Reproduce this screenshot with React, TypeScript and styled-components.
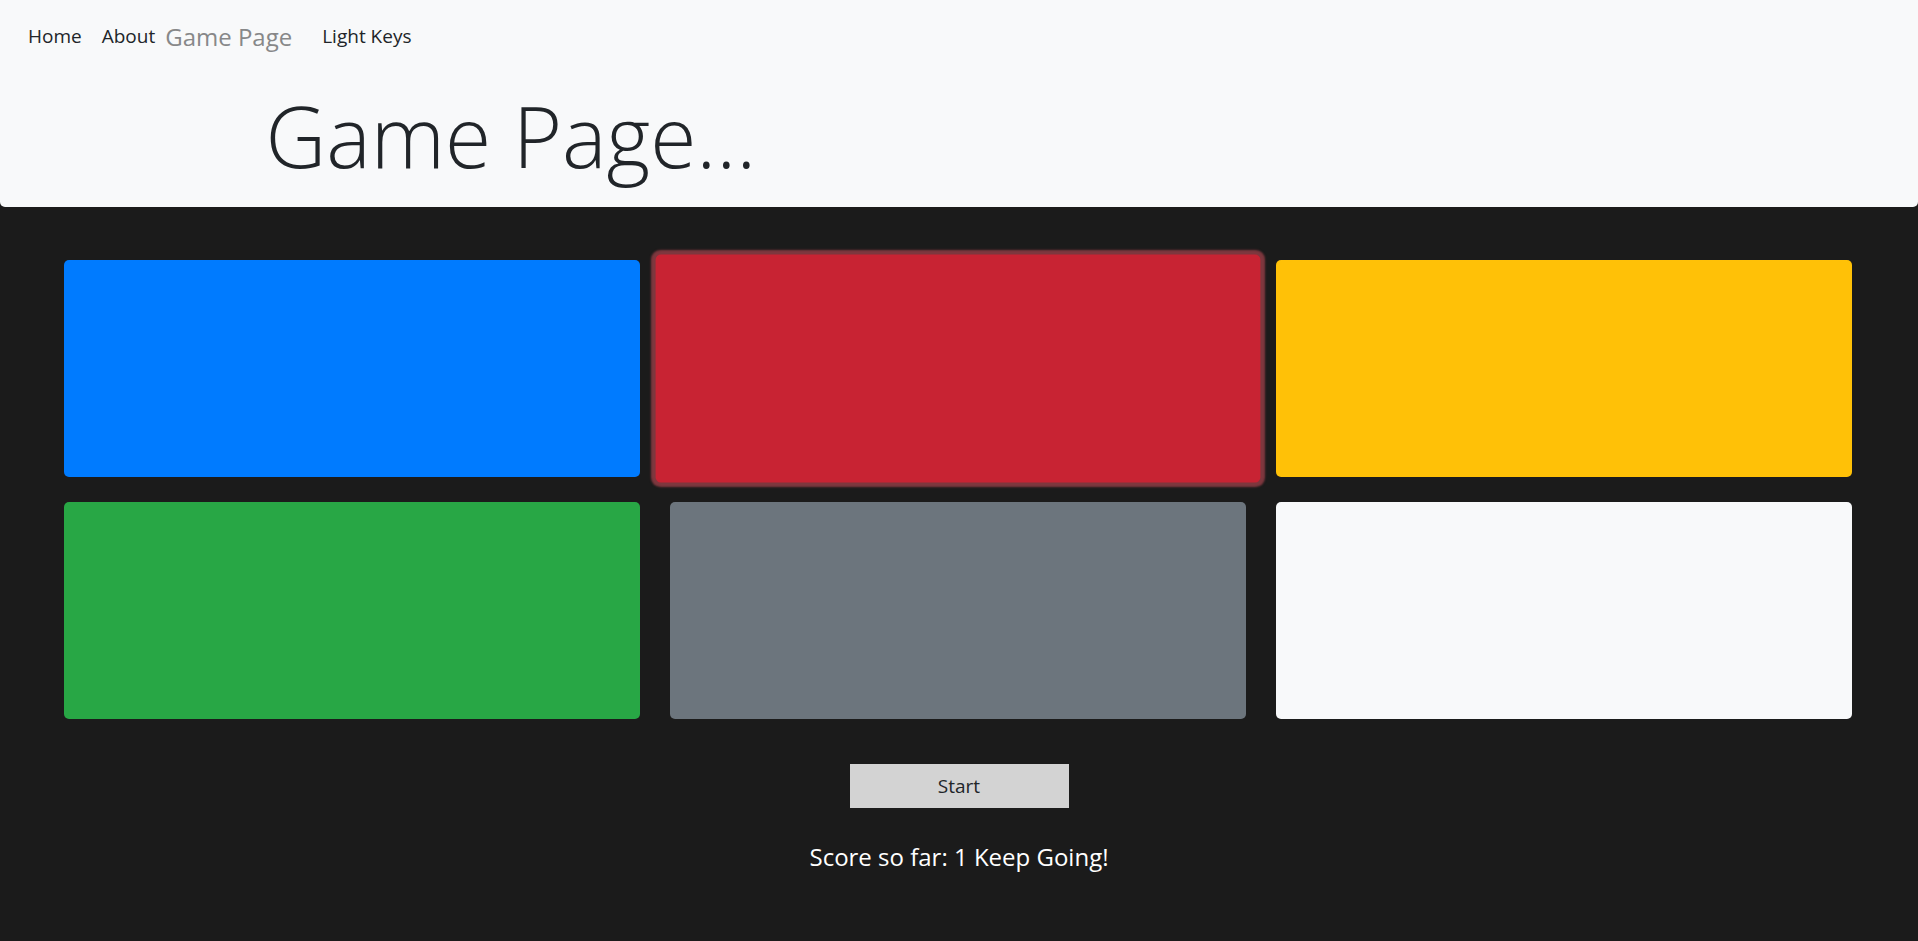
import React from "react";
import styled, { createGlobalStyle } from "styled-components";

const GlobalStyle = createGlobalStyle`
  * {
    box-sizing: border-box;
  }

  body {
    margin: 0;
    background: #1b1b1b;
    font-family: "Open Sans", "Noto Sans", "Liberation Sans", sans-serif;
    color: #212529;
  }
`;

const Header = styled.header`
  background: #f8f9fa;
  border-radius: 0 0 5px 5px;
  padding-bottom: 17px;
`;

const Nav = styled.nav`
  height: 72px;
  display: flex;
  align-items: center;
  padding: 0 18px;
`;

const NavLink = styled.a`
  font-size: 19px;
  color: #212529;
  padding: 0 10px;
  text-decoration: none;
  cursor: pointer;
`;

const Brand = styled.span`
  font-size: 24px;
  color: #878889;
  margin-right: 20px;
`;

const Container = styled.div`
  max-width: 1425px;
  margin: 10px auto 0;
  padding: 0 19px;
`;

const Title = styled.h1`
  margin: 0;
  font-size: 84px;
  font-weight: 300;
  line-height: 108px;
  color: #212529;
`;

const Board = styled.div`
  margin-top: 53px;
  padding: 0 66px 0 64px;
  display: grid;
  grid-template-columns: repeat(3, 1fr);
  column-gap: 30px;
  row-gap: 25px;
`;

interface TileProps {
  $color: string;
  $lit?: boolean;
}

const Tile = styled.div<TileProps>`
  height: 217px;
  border-radius: 5px;
  background: ${(props) => props.$color};
  transform: ${(props) => (props.$lit ? "scale(1.05)" : "none")};
  box-shadow: ${(props) =>
    props.$lit ? "0 0 2px 4px rgba(225, 83, 97, 0.5)" : "none"};
`;

const Controls = styled.div`
  display: flex;
  flex-direction: column;
  align-items: center;
`;

const StartButton = styled.button`
  margin-top: 45px;
  width: 219px;
  height: 44px;
  border: none;
  background: #d3d3d3;
  color: #212529;
  font-family: inherit;
  font-size: 19px;
  cursor: pointer;
`;

const Score = styled.p`
  margin: 31px 0 0;
  font-size: 24px;
  line-height: 36px;
  color: #ffffff;
`;

const tiles = [
  { color: "#007bff" },
  { color: "#c82333", lit: true },
  { color: "#ffc107" },
  { color: "#28a745" },
  { color: "#6c757d" },
  { color: "#f8f9fa" },
];

export default function App() {
  return (
    <>
      <GlobalStyle />
      <Header>
        <Nav>
          <NavLink>Home</NavLink>
          <NavLink>About</NavLink>
          <Brand>Game Page</Brand>
          <NavLink>Light Keys</NavLink>
        </Nav>
        <Container>
          <Title>Game Page...</Title>
        </Container>
      </Header>
      <Board>
        {tiles.map((tile, i) => (
          <Tile key={i} $color={tile.color} $lit={tile.lit} />
        ))}
      </Board>
      <Controls>
        <StartButton>Start</StartButton>
        <Score>Score so far: 1 Keep Going!</Score>
      </Controls>
    </>
  );
}
